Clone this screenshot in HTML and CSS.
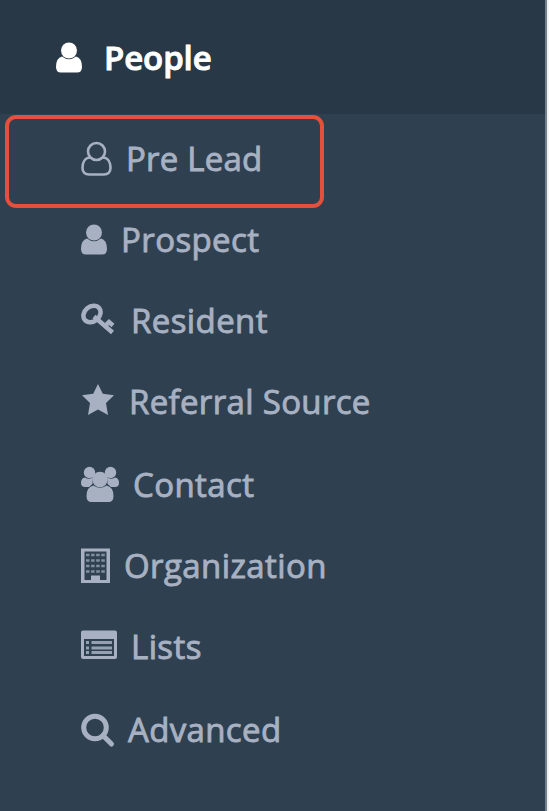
FILE: index.html
```
<!DOCTYPE html>
<html lang="en">
<head>
<meta charset="utf-8">
<title>People</title>
<link rel="stylesheet" href="styles.css">
</head>
<body>
<nav class="sidebar">
  <a class="head">
    <svg width="48" height="44" viewBox="0 0 48 44"><circle cx="13" cy="15.500" r="8"/><path d="M6 21.500Q13 27 20 21.500Q26 23 26 32Q26 37.500 21 37.500H5Q0 37.500 0 32Q0 23 6 21.500Z"/></svg>
    <span class="label people">People</span>
  </a>
  <ul class="menu">
    <li class="item selected">
      <svg width="45" height="44" viewBox="0 0 45 44"><g class="outline"><path d="M9.500 21.500C3.500 21.500 1.500 27 1.500 32C1.500 36 4 38.500 8 38.500H23C27 38.500 29.500 36 29.500 32C29.500 27 27.500 21.500 21.500 21.500"/><circle cx="15.500" cy="15.500" r="8.500"/></g></svg>
      <span class="label pre-lead">Pre Lead</span>
    </li>
    <li class="item">
      <svg width="40" height="44" viewBox="0 0 40 44"><circle cx="13" cy="15.500" r="8"/><path d="M6 21.500Q13 27 20 21.500Q26 23 26 32Q26 37.500 21 37.500H5Q0 37.500 0 32Q0 23 6 21.500Z"/></svg>
      <span class="label prospect">Prospect</span>
    </li>
    <li class="item">
      <svg width="50" height="44" viewBox="0 0 50 44"><g class="key"><ellipse cx="11" cy="16" rx="9.300" ry="7.400" transform="rotate(-40 11 16)"/><path d="M13 18.500L31.500 34.500M24 28L28 24L32 27.500"/></g></svg>
      <span class="label resident">Resident</span>
    </li>
    <li class="item">
      <svg width="48" height="44" viewBox="0 0 48 44"><path d="M17 5L21.800 14.800L33 16.300L25 24L27 36L17 30.500L7 36L9 24L1 16.300L12.200 14.800Z"/></svg>
      <span class="label referral">Referral Source</span>
    </li>
    <li class="item tall">
      <svg width="52" height="44" viewBox="0 0 52 44"><circle cx="8.500" cy="10.500" r="5.700"/><circle cx="29.500" cy="10.500" r="5.700"/><path d="M4 15.500Q8 18 11.500 15.500L11.500 22L8 25H4Q0 25 0 21Q0 16 4 15.500ZM34 15.500Q30 18 26.500 15.500L26.500 22L30 25H34Q38 25 38 21Q38 16 34 15.500Z"/><circle cx="19" cy="17.500" r="7.800"/><path d="M12.500 23.500Q19 28 25.500 23.500Q32.500 25 32.500 34Q32.500 40 27.500 40H10.500Q5.500 40 5.500 34Q5.500 25 12.500 23.500Z"/></svg>
      <span class="label contact">Contact</span>
    </li>
    <li class="item">
      <svg width="43" height="44" viewBox="0 0 43 44"><path fill-rule="evenodd" d="M0 5.500H29V40H0ZM3.500 8.500V37H10V32.500H19V37H25.500V8.500Z"/><path class="windows" d="M5 12H24M5 17.500H24M5 23H24M5 28.500H24"/></svg>
      <span class="label organization">Organization</span>
    </li>
    <li class="item">
      <svg width="50" height="44" viewBox="0 0 50 44"><path fill-rule="evenodd" d="M2 6.500H34Q36 6.500 36 8.500V33Q36 35 34 35H2Q0 35 0 33V8.500Q0 6.500 2 6.500ZM3 15V32H33V15Z"/><path class="rows" d="M5 18.500H8M10.500 18.500H31M5 24H8M10.500 24H31M5 28.500H8M10.500 28.500H31"/></svg>
      <span class="label lists">Lists</span>
    </li>
    <li class="item tall">
      <svg width="47" height="44" viewBox="0 0 47 44"><g class="search"><circle cx="14" cy="20.500" r="11.300"/><path d="M22 28.500L30.500 37"/></g></svg>
      <span class="label advanced">Advanced</span>
    </li>
  </ul>
</nav>
</body>
</html>
```
FILE: styles.css
```
* { box-sizing: border-box; }
body {
  margin: 0;
  height: 811px;
  overflow: hidden;
  background: #f3f3f4;
  font-family: "Open Sans", sans-serif;
}
.sidebar {
  width: 547px;
  height: 811px;
  background: #2f4050;
  border-right: 2px solid #74808b;
}
.head {
  display: flex;
  align-items: center;
  height: 114px;
  padding-left: 56px;
  background: #293846;
  color: #fff;
}
.menu {
  margin: 0;
  padding: 3px 0 0;
  list-style: none;
  color: #a7b1c2;
}
.item {
  position: relative;
  display: flex;
  align-items: center;
  height: 81px;
  padding-left: 81px;
}
.tall {
  height: 83px;
  padding-top: 2px;
}
.selected::after {
  content: "";
  box-sizing: border-box;
  position: absolute;
  left: 5px;
  top: -2px;
  width: 319px;
  height: 93px;
  border: 4px solid #e4503c;
  border-radius: 11px;
}
svg { display: block; flex: none; fill: currentColor; }
.label {
  margin-top: 2px;
  font-size: 33px;
  line-height: 44px;
  white-space: nowrap;
  letter-spacing: 0.4px;
  -webkit-text-stroke: 0.9px currentColor;
}
.people { font-weight: 600; letter-spacing: -0.1px; }
.pre-lead { letter-spacing: 0.2px; }
.referral { letter-spacing: 0.33px; }
.advanced { letter-spacing: 0.35px; }
.outline { fill: none; stroke: currentColor; stroke-width: 2.6; }
.key { fill: none; stroke: currentColor; stroke-width: 4.5; }
.windows { stroke: currentColor; stroke-width: 2.4; stroke-dasharray: 3.5 1.6; opacity: 0.7; }
.rows { stroke: currentColor; stroke-width: 2.8; opacity: 0.85; }
.search { fill: none; stroke: currentColor; stroke-width: 5; stroke-linecap: round; }
```
